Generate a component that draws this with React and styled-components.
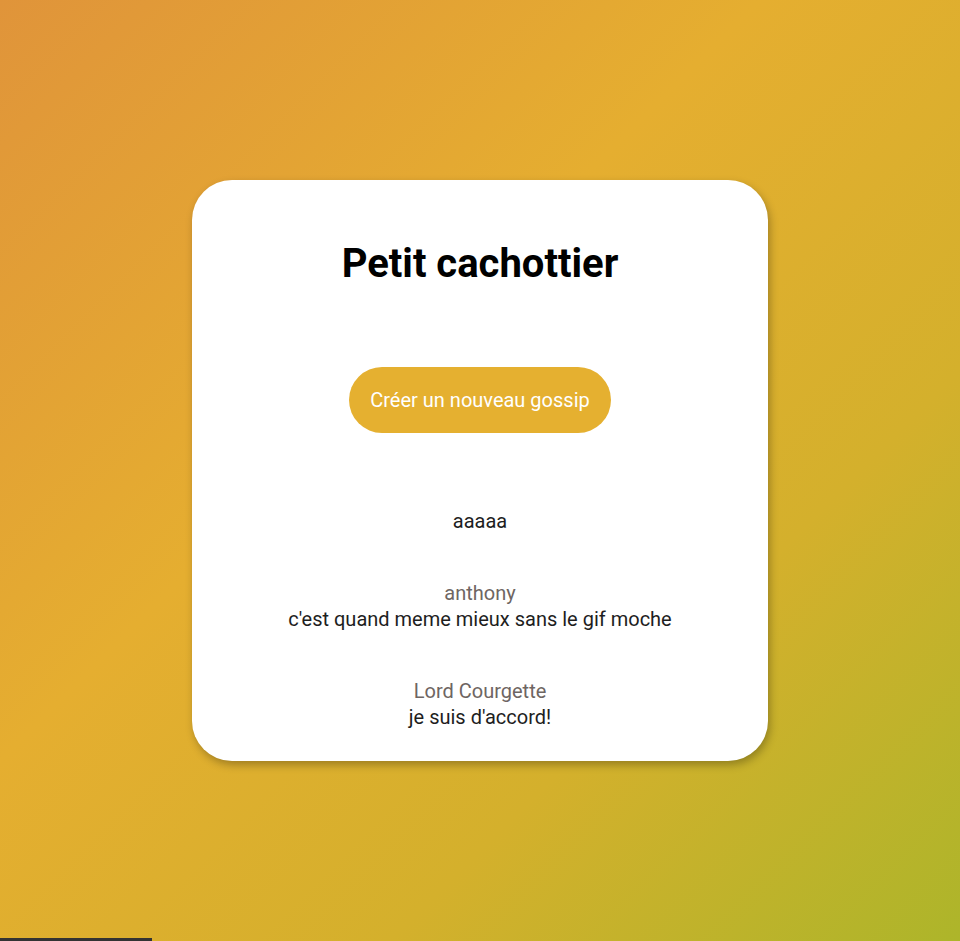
import React from "react";
import styled, { createGlobalStyle } from "styled-components";

const GlobalStyle = createGlobalStyle`
    html, body {
        margin: 0;
        padding: 0;
        height: 100%;
    }
    body {
        font-family: Roboto, "Liberation Sans", sans-serif;
        background: linear-gradient(135deg, #e0943a 0%, #e5ae30 40%, #d4b02c 70%, #adb52a 100%);
        background-attachment: fixed;
    }
`;

const Page = styled.div`
    min-height: 100vh;
    display: flex;
    align-items: center;
    justify-content: center;
`;

const Card = styled.div`
    width: 576px;
    box-sizing: border-box;
    background: #ffffff;
    border-radius: 40px;
    box-shadow: 2px 4px 8px rgba(0, 0, 0, 0.28);
    padding: 40px 30px 31px;
    display: flex;
    flex-direction: column;
    align-items: center;
`;

const Title = styled.h1`
    margin: 20px 0 0;
    font-size: 40px;
    line-height: 47px;
    font-weight: 700;
    color: #000;
`;

const NewButton = styled.button`
    margin-top: 80px;
    border: none;
    border-radius: 33px;
    background: #e5b030;
    color: #fff;
    font-family: Roboto, "Liberation Sans", sans-serif;
    font-size: 20px;
    line-height: 26px;
    padding: 20px 21px;
    cursor: pointer;
`;

const GossipList = styled.div`
    margin-top: 75px;
    display: flex;
    flex-direction: column;
    align-items: center;
    gap: 46px;
`;

const Gossip = styled.div`
    display: flex;
    flex-direction: column;
    align-items: center;
    font-size: 20px;
    line-height: 26px;
    text-align: center;
`;

const Author = styled.div`
    color: #6e6562;
`;

const Content = styled.div`
    color: #1e1e1e;
`;

const LoadBar = styled.div`
    position: fixed;
    left: 0;
    bottom: 0;
    width: 152px;
    height: 3px;
    background: #333333;
`;

const gossips = [
    { author: "", text: "aaaaa" },
    { author: "anthony", text: "c'est quand meme mieux sans le gif moche" },
    { author: "Lord Courgette", text: "je suis d'accord!" },
];

export default function App() {
    return (
        <>
            <GlobalStyle />
            <Page>
                <Card>
                    <Title>Petit cachottier</Title>
                    <NewButton>Créer un nouveau gossip</NewButton>
                    <GossipList>
                        {gossips.map((g, i) => (
                            <Gossip key={i}>
                                {g.author && <Author>{g.author}</Author>}
                                <Content>{g.text}</Content>
                            </Gossip>
                        ))}
                    </GossipList>
                </Card>
            </Page>
            <LoadBar />
        </>
    );
}
